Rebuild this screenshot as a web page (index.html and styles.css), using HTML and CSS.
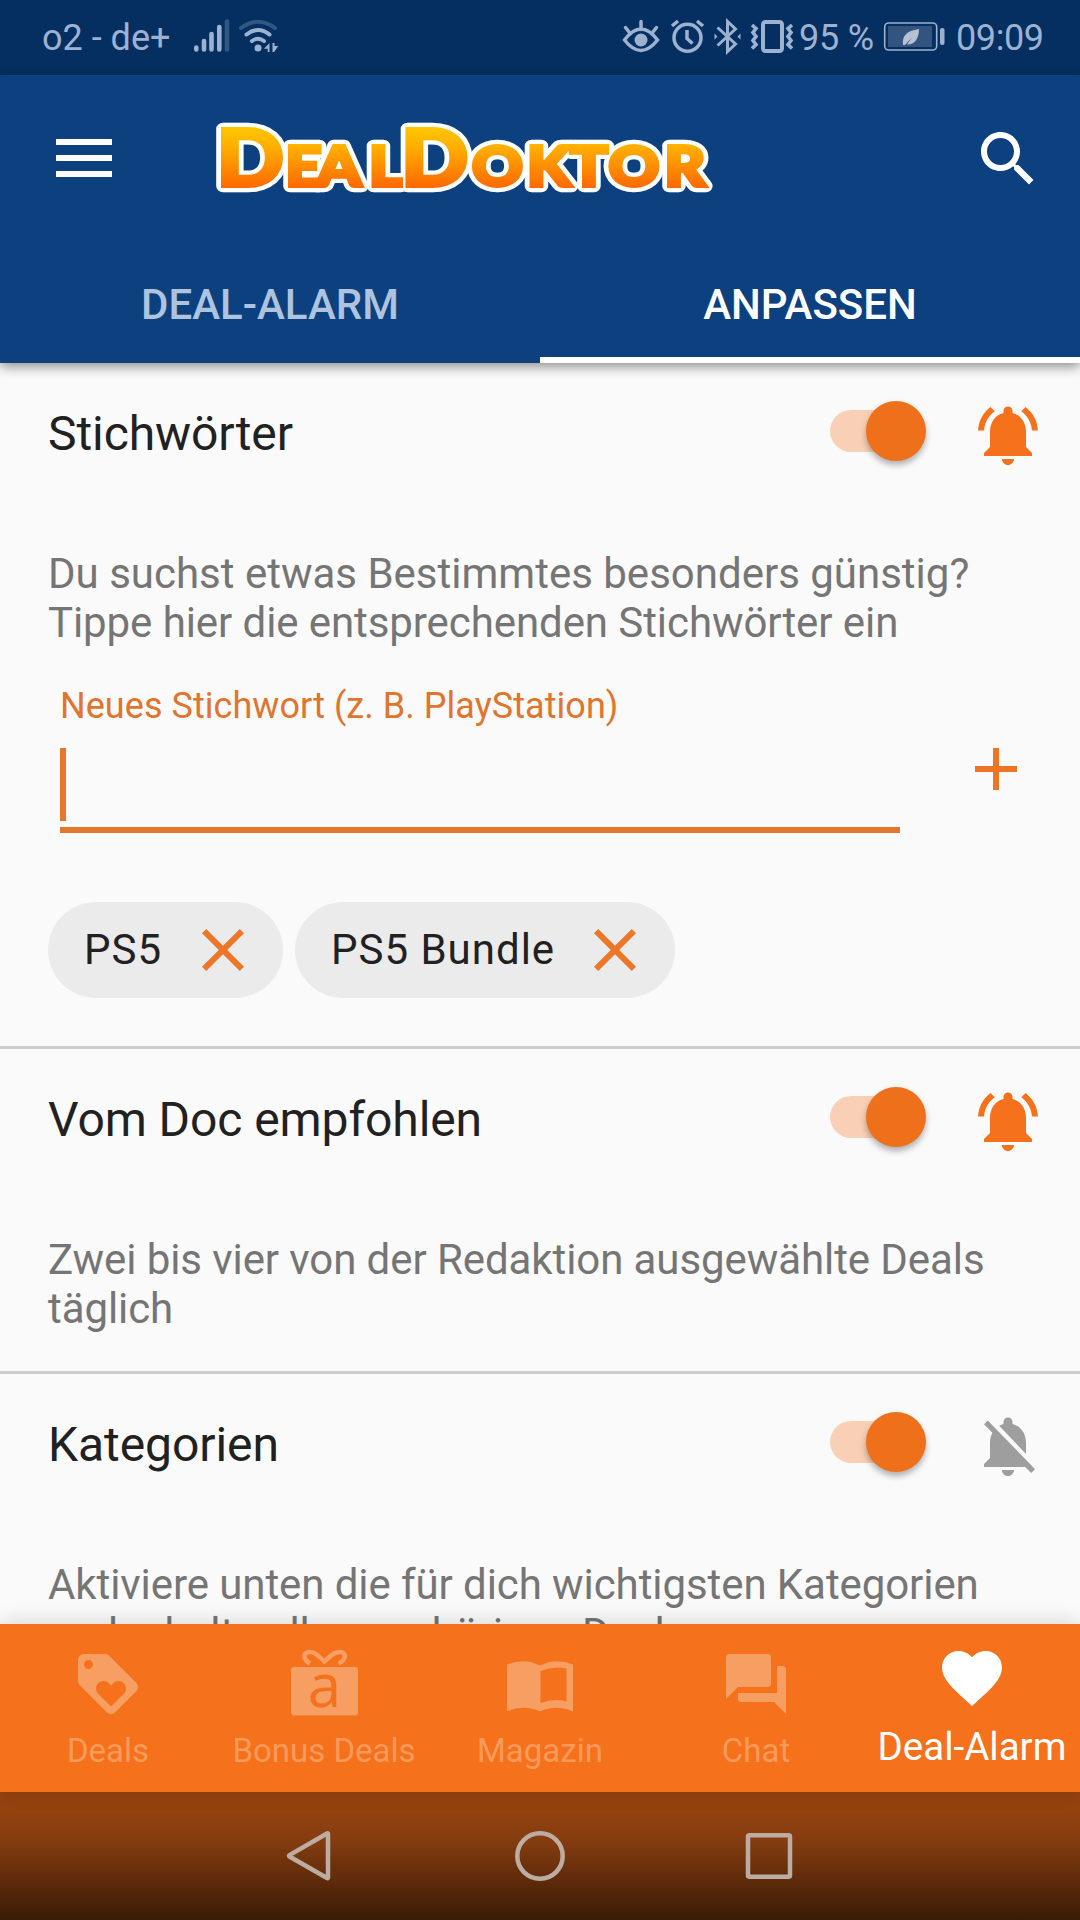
FILE: index.html
```html
<!DOCTYPE html>
<html lang="de">
<head>
<meta charset="utf-8">
<title>DealDoktor</title>
<link rel="stylesheet" href="styles.css">
</head>
<body>
<svg class="defs" width="0" height="0" aria-hidden="true">
  <symbol id="bell-on" viewBox="0 0 24 24"><path d="M7.58 4.08L6.15 2.65C3.75 4.48 2.17 7.3 2.03 10.5h2c.15-2.65 1.51-4.97 3.55-6.42zm12.39 6.42h2c-.15-3.2-1.73-6.02-4.12-7.85l-1.42 1.43c2.02 1.45 3.39 3.77 3.54 6.42zM18 11c0-3.07-1.64-5.64-4.5-6.32V4c0-.83-.67-1.5-1.5-1.5s-1.5.67-1.5 1.5v.68C7.63 5.36 6 7.92 6 11v5l-2 2v1h16v-1l-2-2v-5zm-6 11c.14 0 .27-.01.4-.04.65-.14 1.18-.58 1.44-1.18.1-.24.15-.5.15-.78h-4c.01 1.1.9 2 2.01 2z"/></symbol>
  <symbol id="bell-off" viewBox="0 0 24 24"><path d="M20 18.69L7.84 6.14 5.27 3.49 4 4.76l2.8 2.8v.01c-.52.99-.8 2.16-.8 3.42v5l-2 2v1h13.73l2 2L21 19.72l-1-1.03zM12 22c1.11 0 2-.89 2-2h-4c0 1.11.89 2 2 2zm6-7.32V11c0-3.08-1.64-5.64-4.5-6.32V4c0-.83-.67-1.5-1.5-1.5s-1.5.67-1.5 1.5v.68c-.15.03-.29.08-.42.12-.1.03-.2.07-.3.11h-.01c-.01 0-.01 0-.02.01-.23.09-.46.2-.68.31 0 0-.01 0-.01.01L18 14.68z"/></symbol>
  <symbol id="close" viewBox="0 0 24 24"><path d="M19 6.41L17.59 5 12 10.59 6.41 5 5 6.41 10.59 12 5 17.59 6.41 19 12 13.41 17.59 19 19 17.59 13.41 12z"/></symbol>
</svg>

<div class="screen">
  <header class="status">
    <span class="carrier">o2 - de+</span>
    <svg class="net-icons" width="90" height="40" viewBox="190 16 90 40">
      <g stroke-width="4.6" stroke-linecap="round" stroke="#9db2d1" fill="none">
        <path d="M196.3 47.5v2M204 41v8.5M211.5 34v15.500M219.300 27v22.500"/>
        <path d="M227 21.500v28" opacity=".3"/>
        <path d="M241 28q17-12.500 34 0" opacity=".3" stroke-width="4"/>
        <path d="M246.500 34.500q11.500-9 23 0M252 41q6-4.500 12 0" stroke-width="4"/>
      </g>
      <circle cx="258" cy="48" r="3.500" fill="#9db2d1"/>
      <path d="M269.500 43v9h-1.800v-3.200H264zM272.500 43h2v3h3.700l-4 6h-1.700z" fill="#9db2d1"/>
    </svg>
    <svg class="sys-icons" width="174" height="40" viewBox="622 16 174 40">
      <g fill="none" stroke="#9db2d1" stroke-width="3">
        <path d="M624.500 40Q641 18 657.500 40Q641 61 624.500 40zM641 21.500v8M625.500 27.500l4 5M656.500 27.500l-4 5" stroke-linecap="round" stroke-width="3.500"/>
        <circle cx="687.500" cy="37.800" r="13.500" stroke-width="3.500"/>
        <path d="M687 30v8.500l5.500 5" stroke-width="3.500"/>
        <path d="M672 26l6-5M703 26l-6-5" stroke-width="3.500"/>
        <path d="M717.500 27.500l18 16.500-8 7.500v-30l8 7.500-18 16.500" stroke-linejoin="miter"/>
        <rect x="763" y="22" width="19" height="29" rx="2.500" stroke-width="4"/>
        <path d="M752 25l4 3.500-3 4 3 4-3 4 3 4-4 4M792 25l-4 3.500 3 4-3 4 3 4-3 4 4 4" stroke-width="3.600"/>
      </g>
      <circle cx="641" cy="40" r="6.500" fill="#9db2d1"/>
      <path d="M714.500 33.500l3 3-3 3zM740.500 33.500l-3 3 3 3z" fill="#9db2d1"/>
    </svg>
    <span class="percent">95 %</span>
    <svg class="battery" width="64" height="32" viewBox="883 20 64 32">
      <rect x="884.700" y="23" width="52" height="27" rx="4" fill="none" stroke="#9db2d1" stroke-width="1.600"/>
      <rect x="888" y="26" width="44" height="21" fill="#345480"/>
      <rect x="940" y="28" width="4.500" height="17" rx="2" fill="#9db2d1"/>
      <path d="M903 45c-1-9 3-14 16-16 0 9-4 16-12 15.500l5-7-7 7.500z" fill="#b6c2d3"/>
    </svg>
    <span class="clock">09:09</span>
  </header>

  <div class="appbar">
    <div class="toolbar">
      <svg class="menu" width="56" height="38" viewBox="0 0 56 38"><path d="M0 0h56v6H0zM0 16h56v6H0zM0 32h56v6H0z" fill="#fff"/></svg>
      <svg class="logo" width="500" height="80" viewBox="214 118 500 80">
        <defs>
          <linearGradient id="sun" gradientUnits="userSpaceOnUse" x1="0" y1="129" x2="0" y2="187">
            <stop offset="0" stop-color="#ffc400"/><stop offset=".3" stop-color="#ffb000"/><stop offset="1" stop-color="#ff6a00"/>
          </linearGradient>
          <text id="word" y="186" transform="scale(1.12 1)"><tspan class="cap" x="193.300">D</tspan><tspan x="254.900 283 329.500">EAL</tspan><tspan class="cap" x="358">D</tspan><tspan x="421.400 470.500 509 543.300 593.300">OKTOR</tspan></text>
        </defs>
        <use href="#word" class="logo-edge"/>
        <use href="#word" class="logo-face"/>
      </svg>
      <svg class="search" width="72" height="72" viewBox="0 0 24 24"><path fill="#fff" d="M15.500 14h-.79l-.28-.27C15.410 12.590 16 11.110 16 9.500 16 5.910 13.090 3 9.500 3S3 5.910 3 9.500 5.910 16 9.500 16c1.610 0 3.090-.59 4.230-1.570l.27.28v.79l5 4.990L20.490 19l-4.990-5zm-6 0C7.010 14 5 11.990 5 9.500S7.010 5 9.500 5 14 7.010 14 9.500 11.990 14 9.500 14z"/></svg>
    </div>
    <nav class="tabs">
      <span class="tab">DEAL-ALARM</span>
      <span class="tab active">ANPASSEN</span>
    </nav>
  </div>

  <main class="content">
    <section class="card keywords">
      <div class="head"><h2>Stichwörter</h2><span class="switch"><i></i></span><svg class="bell"><use href="#bell-on"/></svg></div>
      <p>Du suchst etwas Bestimmtes besonders günstig?<br><span class="tight">Tippe hier die entsprechenden Stichwörter ein</span></p>
      <div class="entry">
        <div class="field"><label>Neues Stichwort (z. B. PlayStation)</label><div class="input"><span class="caret"></span></div></div>
        <svg class="add" viewBox="0 0 24 24"><path d="M19 13h-6v6h-2v-6H5v-2h6V5h2v6h6v2z"/></svg>
      </div>
      <div class="chips">
        <span class="chip"><span class="chip-text">PS5</span><svg><use href="#close"/></svg></span>
        <span class="chip"><span class="chip-text bundle">PS5 Bundle</span><svg><use href="#close"/></svg></span>
      </div>
    </section>
    <section class="card doc">
      <div class="head"><h2>Vom Doc empfohlen</h2><span class="switch"><i></i></span><svg class="bell"><use href="#bell-on"/></svg></div>
      <p class="tight">Zwei bis vier von der Redaktion ausgewählte Deals<br>täglich</p>
    </section>
    <section class="card categories">
      <div class="head"><h2>Kategorien</h2><span class="switch"><i></i></span><svg class="bell off"><use href="#bell-off"/></svg></div>
      <p class="tight">Aktiviere unten die für dich wichtigsten Kategorien<br>und erhalte alle zugehörigen Deals</p>
    </section>
  </main>

  <nav class="bottom">
    <div class="item"><svg viewBox="0 0 24 24"><path d="M21.410 11.580l-9-9C12.050 2.220 11.550 2 11 2H4c-1.100 0-2 .9-2 2v7c0 .55.22 1.050.59 1.420l9 9c.36.36.86.58 1.410.58.55 0 1.050-.22 1.410-.59l7-7c.37-.36.59-.86.59-1.410 0-.55-.23-1.060-.59-1.420zM5.500 7C4.670 7 4 6.330 4 5.500S4.670 4 5.500 4 7 4.670 7 5.500 6.330 7 5.500 7zm11.770 8.270L13 19.540l-4.270-4.270C8.280 14.810 8 14.190 8 13.500c0-1.380 1.120-2.500 2.500-2.500.69 0 1.320.28 1.770.74l.73.72.73-.73c.45-.45 1.080-.73 1.770-.73 1.380 0 2.500 1.120 2.500 2.500 0 .69-.28 1.320-.73 1.770z"/></svg><span>Deals</span></div>
    <div class="item"><svg viewBox="288 1648 72 72"><rect x="291" y="1667" width="67" height="48.500" rx="3"/><path d="M310 1663.500c-6-3-7-9-3-11 6-2.500 11 3 17.500 9 6.500-6 12-11.500 18-9 4 2 3 8-4 11" fill="none" stroke="#f79e62" stroke-width="4.500"/><text class="gift-letter" x="324.500" y="1707" text-anchor="middle">a</text></svg><span>Bonus Deals</span></div>
    <div class="item"><svg viewBox="504 1648 72 72"><path d="M507 1664.500q17-7 33 1 16-8 33-1v47q-17-7.500-33 0-16-7.500-33 0zM540.500 1671v32q14-5 26-1.500v-33q-13-3-26 2.500z" fill-rule="evenodd"/></svg><span>Magazin</span></div>
    <div class="item"><svg viewBox="0 0 24 24"><path d="M21 6h-2v9H6v2c0 .55.45 1 1 1h11l4 4V7c0-.55-.45-1-1-1zm-4 6V3c0-.55-.45-1-1-1H3c-.55 0-1 .45-1 1v14l4-4h10c.55 0 1-.45 1-1z"/></svg><span>Chat</span></div>
    <div class="item active"><svg viewBox="0 0 24 24"><path d="M12 21.350l-1.450-1.320C5.400 15.360 2 12.280 2 8.500 2 5.420 4.420 3 7.500 3c1.740 0 3.410.81 4.500 2.090C13.090 3.810 14.760 3 16.500 3 19.580 3 22 5.420 22 8.500c0 3.780-3.400 6.860-8.550 11.540L12 21.350z"/></svg><span>Deal-Alarm</span></div>
  </nav>

  <footer class="sysnav">
    <svg width="54" height="54" viewBox="282 1829 54 54"><path d="M327 1833.500q1-.5 1 .500v43.500q0 1-1 .5l-37.500-21.500q-1-.7 0-1.400z"/></svg>
    <svg width="54" height="54" viewBox="513 1829 54 54"><circle cx="540" cy="1856" r="22.700"/></svg>
    <svg width="54" height="54" viewBox="742 1829 54 54"><rect x="748" y="1835.300" width="42" height="41.500" rx="1.500"/></svg>
  </footer>
</div>
</body>
</html>
```
FILE: styles.css
```css
* { box-sizing: border-box; }
body { margin: 0; font-family: Roboto, "Noto Sans", sans-serif; }
svg { display: block; flex: none; }
.defs { position: absolute; }
.screen { width: 1080px; height: 1920px; display: flex; flex-direction: column; background: #fafafa; overflow: hidden; }

.status { height: 75px; flex: none; display: flex; align-items: flex-start; background: #052f60; color: #9db2d1; font-size: 36px; line-height: 42px; padding: 0 37px 0 42px; white-space: nowrap; }
.carrier { width: 148px; margin-top: 17px; }
.net-icons, .sys-icons { margin-top: 16px; }
.sys-icons { margin-left: auto; }
.percent { margin-top: 17px; margin-left: 3px; width: 84px; letter-spacing: -.2px; }
.battery { margin-top: 20px; }
.clock { margin-top: 17px; margin-left: 9px; width: 87px; letter-spacing: -.4px; }

.appbar { height: 288px; flex: none; background: #0c407e; display: flex; flex-direction: column; position: relative; z-index: 2; box-shadow: 0 4px 11px rgba(0,0,0,.42); }
.toolbar { height: 168px; display: flex; align-items: flex-start; padding: 0 36px 0 56px; }
.menu { margin-top: 64px; }
.logo { margin: 43px 0 0 102px; overflow: visible; }
.search { margin: 48px 0 0 auto; }
#word { font-family: Lato, sans-serif; font-weight: 900; font-size: 56px; }
#word .cap { font-size: 79px; }
.logo-edge { fill: #fff; stroke: #fff; stroke-width: 12.5px; stroke-linejoin: round; }
.logo-face { fill: url(#sun); stroke: url(#sun); stroke-width: 4px; }
.tabs { height: 120px; display: flex; }
.tab { flex: 1; text-align: center; font-size: 42px; font-weight: 500; line-height: 50px; padding-top: 37px; color: #aec3de; }
.tab.active { color: #fff; border-bottom: 6px solid #fff; }

.content { height: 1261px; flex: none; overflow: hidden; }
.card { border-bottom: 3px solid #ccc; }
.keywords { height: 686px; }
.doc { height: 325px; }
.categories { height: 400px; border: 0; }
.head { height: 140px; display: flex; align-items: flex-start; padding: 36px 36px 0 48px; }
h2 { margin: 0; padding-top: 7px; font-size: 48px; font-weight: 400; line-height: 56px; letter-spacing: -.08px; color: #212121; flex: 1; }
.switch { width: 84px; height: 42px; border-radius: 21px; background: #f9d0b5; margin: 11px 58px 0 0; display: flex; align-items: center; }
.switch i { flex: none; width: 60px; height: 60px; margin-left: 35.5px; border-radius: 50%; background: #ee701a; box-shadow: 0 4px 6px rgba(0,0,0,.3); }
.bell { width: 72px; height: 72px; fill: #f5711b; }
.bell.off { fill: #9e9e9e; }
p { margin: 0; padding: 46px 0 0 48px; font-size: 42px; line-height: 49px; color: #757575; white-space: nowrap; }
.tight { letter-spacing: -.08px; }

.entry { display: flex; margin-top: 34px; padding: 0 48px 0 60px; justify-content: space-between; }
.field { width: 840px; height: 152px; border-bottom: 6px solid #e2772e; display: flex; flex-direction: column; }
label { font-size: 36px; line-height: 42px; color: #e0752d; padding-top: 4px; height: 67px; letter-spacing: .05px; }
.caret { display: block; width: 6px; height: 73px; background: #e8772e; }
.add { width: 72px; height: 72px; margin-top: 52px; fill: #ec7626; }
.chips { display: flex; gap: 12px; padding: 69px 48px 0; }
.chip { display: flex; align-items: center; height: 96px; border-radius: 48px; background: #ebebeb; padding: 0 24px 0 36px; }
.chip-text { font-size: 42px; line-height: 50px; color: #212121; letter-spacing: 1px; width: 103px; }
.chip-text.bundle { width: 248px; }
.chip svg { width: 72px; height: 72px; fill: #ed7728; }

.bottom { height: 168px; flex: none; background: #f5711c; display: flex; box-shadow: 0 -2px 20px rgba(0,0,0,.14); position: relative; z-index: 2; }
.item { width: 216px; padding-top: 24px; display: flex; flex-direction: column; align-items: center; font-size: 33px; line-height: 40px; color: #f99a5a; white-space: nowrap; }
.item svg { width: 72px; height: 72px; fill: #f79e62; overflow: visible; }
.item span { margin-top: 11px; }
.item.active { padding-top: 18px; color: #fff; font-size: 38.5px; }
.item.active span { margin-top: 13px; }
.item.active svg { fill: #fff; }
.gift-letter { font-family: "Open Sans", sans-serif; font-size: 60px; fill: #f5711c; }

.sysnav { height: 128px; flex: none; background: linear-gradient(#94420f 0%, #94420f 15%, #843c10 38%, #3a1b05 100%); display: flex; align-items: flex-start; padding: 37px 0 0 282px; gap: 177px; }
.sysnav svg:nth-child(2) { margin-right: -2px; }
.sysnav svg { fill: none; stroke: #bdaca1; stroke-width: 4.5px; }
```
